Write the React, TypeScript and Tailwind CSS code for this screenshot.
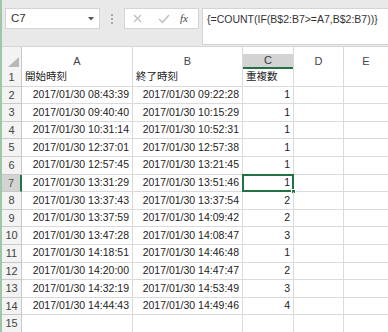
const rows: [string, string, string, string][] = [
  ["1", "開始時刻", "終了時刻", "重複数"],
  ["2", "2017/01/30 08:43:39", "2017/01/30 09:22:28", "1"],
  ["3", "2017/01/30 09:40:40", "2017/01/30 10:15:29", "1"],
  ["4", "2017/01/30 10:31:14", "2017/01/30 10:52:31", "1"],
  ["5", "2017/01/30 12:37:01", "2017/01/30 12:57:38", "1"],
  ["6", "2017/01/30 12:57:45", "2017/01/30 13:21:45", "1"],
  ["7", "2017/01/30 13:31:29", "2017/01/30 13:51:46", "1"],
  ["8", "2017/01/30 13:37:43", "2017/01/30 13:37:54", "2"],
  ["9", "2017/01/30 13:37:59", "2017/01/30 14:09:42", "2"],
  ["10", "2017/01/30 13:47:28", "2017/01/30 14:08:47", "3"],
  ["11", "2017/01/30 14:18:51", "2017/01/30 14:46:48", "1"],
  ["12", "2017/01/30 14:20:00", "2017/01/30 14:47:47", "2"],
  ["13", "2017/01/30 14:32:19", "2017/01/30 14:53:49", "3"],
  ["14", "2017/01/30 14:44:43", "2017/01/30 14:49:46", "4"],
  ["15", "", "", ""],
];

const font = "font-['Liberation_Sans','Noto_Sans_CJK_JP',sans-serif]";

export default function App() {
  return (
    <div className={`w-[388px] h-[332px] overflow-hidden flex bg-[#e9e9e9] ${font}`}>
      {/* left accent strip */}
      <div className="w-[2px] shrink-0 bg-[#9fc6a5]"></div>

      <div className="flex-1 flex flex-col min-w-0">
        {/* Formula bar */}
        <div className="h-[47px] shrink-0 flex items-start pt-[8px] border-b border-[#d6d6d6]">
          <div className="ml-[3px] w-[95px] h-[21px] shrink-0 bg-white border border-[#d4d4d4] flex items-center pl-[5px] pr-[5px] text-[11.5px] text-[#333]">
            <span className="flex-1">C7</span>
            <svg width="6" height="4" viewBox="0 0 6 4">
              <path d="M0 0 L6 0 L3 3.5 Z" fill="#555" />
            </svg>
          </div>
          <div className="w-[24px] h-[21px] shrink-0 flex flex-col items-center justify-center gap-[2px]">
            <div className="w-[2px] h-[2px] bg-[#a8a8a8]"></div>
            <div className="w-[2px] h-[2px] bg-[#a8a8a8]"></div>
            <div className="w-[2px] h-[2px] bg-[#a8a8a8]"></div>
          </div>
          <div className="w-[75px] h-[21px] shrink-0 bg-white border border-[#d4d4d4] flex items-center">
            <svg width="26" height="19" viewBox="0 0 26 19">
              <path d="M9 6 L16 13 M16 6 L9 13" stroke="#bdbdbd" strokeWidth="1.2" />
            </svg>
            <svg width="26" height="19" viewBox="0 0 26 19">
              <path d="M8 10 L11.5 13.5 L18 6" stroke="#bdbdbd" strokeWidth="1.4" fill="none" />
            </svg>
            <span className="ml-[3px] text-[11px] italic text-[#444] font-['Liberation_Serif',serif]">fx</span>
          </div>
          <div className="ml-[3px] flex-1 h-[37px] bg-white border border-[#d4d4d4] border-r-0 pl-[4px] pt-[3px] text-[10.5px] text-[#333] whitespace-nowrap">
            {"{=COUNT(IF(B$2:B7>=A7,B$2:B7))}"}
          </div>
        </div>

        {/* Column headers */}
        <div className="h-[22px] shrink-0 flex bg-white text-[11px] text-[#444]">
          <div className="w-[20px] shrink-0 border-r border-[#c8c8c8] bg-[#f3f3f3] flex items-end justify-end pb-[2px] pr-[2px]">
            <svg width="11" height="10" viewBox="0 0 11 10">
              <path d="M11 0 L11 10 L0 10 Z" fill="#b8b8b8" />
            </svg>
          </div>
          <div className="w-[111px] shrink-0 border-r border-[#d8d8d8] flex items-end">
            <div className="h-[15px] w-full flex items-center justify-center">A</div>
          </div>
          <div className="w-[110px] shrink-0 border-r border-[#d8d8d8] flex items-end">
            <div className="h-[15px] w-full flex items-center justify-center">B</div>
          </div>
          <div className="w-[51px] shrink-0 border-r border-[#d8d8d8] flex items-end">
            <div className="h-[15px] w-full bg-[#d3d3d3] border-b-2 border-[#217346] flex items-center justify-center text-[#3a3a3a]">C</div>
          </div>
          <div className="w-[50px] shrink-0 border-r border-[#d8d8d8] flex items-end">
            <div className="h-[15px] w-full flex items-center justify-center">D</div>
          </div>
          <div className="flex-1 flex items-end">
            <div className="h-[15px] w-full flex items-center justify-center">E</div>
          </div>
        </div>

        {/* Grid rows */}
        <div className="flex-1 bg-white text-[10.5px] text-[#222]">
          {rows.map(([n, a, b, c]) => {
            const sel = n === "7";
            const head = n === "1";
            return (
              <div key={n} className="h-[17.6px] flex">
                <div
                  className={`w-[20px] shrink-0 flex items-center justify-center text-[11px] border-b ${
                    sel
                      ? "bg-[#d3d3d3] border-r-2 border-r-[#217346] border-b-[#c8c8c8] text-[#555]"
                      : "bg-[#f3f3f3] border-r border-[#c8c8c8] text-[#444]"
                  }`}
                >
                  {n}
                </div>
                <div className={`w-[111px] shrink-0 border-r border-b border-[#dadada] flex items-center px-[3px] ${head ? "justify-start" : "justify-end"}`}>
                  {a}
                </div>
                <div className={`w-[110px] shrink-0 border-r border-b border-[#dadada] flex items-center px-[3px] ${head ? "justify-start" : "justify-end"}`}>
                  {b}
                </div>
                <div className={`relative w-[51px] shrink-0 border-r border-b border-[#dadada] flex items-center px-[3px] ${head ? "justify-start" : "justify-end"}`}>
                  {c}
                  {sel && (
                    <>
                      <div className="absolute -top-px -left-px -right-px -bottom-px border-2 border-[#217346]"></div>
                      <div className="absolute -bottom-[3px] -right-[3px] w-[5px] h-[5px] bg-[#217346] border border-white"></div>
                    </>
                  )}
                </div>
                <div className="w-[50px] shrink-0 border-r border-b border-[#dadada]"></div>
                <div className="flex-1 border-b border-[#dadada]"></div>
              </div>
            );
          })}
        </div>
      </div>
    </div>
  );
}
